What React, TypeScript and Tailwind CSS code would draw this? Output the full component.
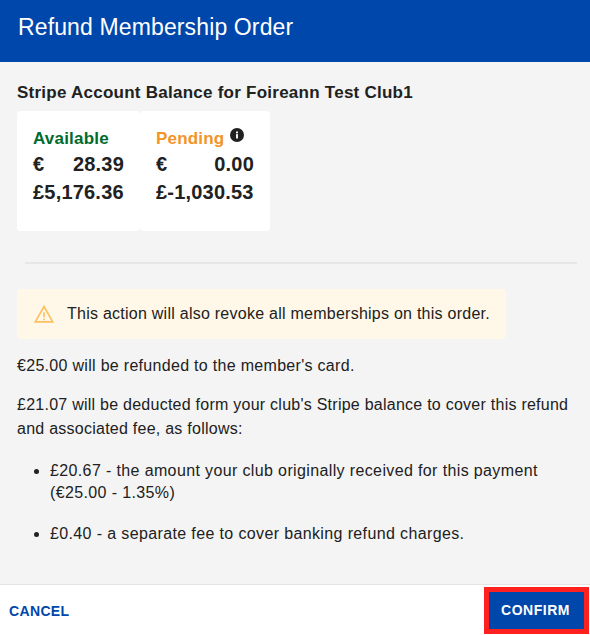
function BalanceCard({ title, color, euro, pound, width, info }: { title: string; color: string; euro: string; pound: string; width: string; info?: boolean }) {
  return (
    <div className="bg-white rounded-[4px] h-[120px] pl-4 pt-[14px] font-bold">
      <div className={`flex items-start text-[17px] leading-[27px] tracking-[0.2px] ${color}`}>
        {title}
        {info && (
          <svg viewBox="0 0 24 24" className="w-[14px] h-[14px] ml-[6px] mt-[3px]">
            <circle cx="12" cy="12" r="12" fill="#212121" />
            <rect x="10.4" y="10.5" width="3.2" height="7.5" fill="#fff" />
            <rect x="10.4" y="6" width="3.2" height="3.2" fill="#fff" />
          </svg>
        )}
      </div>
      <div className={`flex justify-between text-[20px] leading-[27px] -mt-[1px] tracking-[0.2px] text-[#212121] ${width}`}>
        <span>€</span>
        <span>{euro}</span>
      </div>
      <div className="text-[20px] leading-[28px] tracking-[0.2px] text-[#212121] whitespace-nowrap">{pound}</div>
    </div>
  )
}

export default function App() {
  return (
    <div className="w-[590px] h-[635px] flex flex-col bg-[#f4f4f4] text-[#212121] font-['Liberation_Sans',Arial,sans-serif] overflow-hidden">
      <div className="h-[62px] shrink-0 bg-[#0047ab] text-white text-[23px] leading-[55px] pl-[18px] tracking-[0.13px]">Refund Membership Order</div>

      <div className="flex-1 px-[17px] pt-[19px]">
        <h2 className="text-[17px] font-bold leading-[24px] tracking-[0.25px]">Stripe Account Balance for Foireann Test Club1</h2>
        <div className="flex mt-[6px]">
          <div className="w-[123px]">
            <BalanceCard title="Available" color="text-[#006b2d]" euro="28.39" pound="£5,176.36" width="w-[91px]" />
          </div>
          <div className="w-[130px]">
            <BalanceCard title="Pending" color="text-[#f39426]" euro="0.00" pound="£-1,030.53" width="w-[98px]" info />
          </div>
        </div>

        <div className="h-[2px] bg-[#e7e7e7] ml-[8px] mr-[-4px] mt-[31px]" />

        <div className="mt-[25px] w-[489px] h-[50px] bg-[#fff8e8] rounded-[4px] flex items-center pl-[17px] text-[16px] tracking-[0.25px]">
          <svg viewBox="0 0 24 24" fill="none" stroke="#fbc15e" strokeWidth="2" className="w-[20px] h-[20px] mr-[13px] shrink-0">
            <path d="M12 3 L22.5 21.5 H1.5 Z" strokeLinejoin="miter" />
            <path d="M12 10 V16 M12 17.5 V19.5" />
          </svg>
          This action will also revoke all memberships on this order.
        </div>

        <p className="mt-[15px] text-[16px] leading-[24px] tracking-[0.3px]">€25.00 will be refunded to the member's card.</p>
        <p className="mt-[15px] text-[16px] leading-[24px] tracking-[0.25px]">£21.07 will be deducted form your club's Stripe balance to cover this refund and associated fee, as follows:</p>
        <ul className="list-disc pl-[33px] mt-[19px] text-[16px] leading-[22px] tracking-[0.37px]">
          <li>£20.67 - the amount your club originally received for this payment (€25.00 - 1.35%)</li>
          <li className="mt-[19px]">£0.40 - a separate fee to cover banking refund charges.</li>
        </ul>
      </div>

      <div className="h-[51px] shrink-0 bg-white border-t border-[#e4e4e4] flex items-center justify-between pl-[9px] pr-[1px]">
        <span className="text-[14px] font-bold tracking-[0.35px] mt-[2px] text-[#0047ab]">CANCEL</span>
        <button className="w-[105px] h-[47px] mt-[1px] pr-[2px] border-[5px] border-[#ff2020] bg-[#0047ab] text-white text-[14px] font-bold tracking-[0.5px]">CONFIRM</button>
      </div>
    </div>
  )
}
